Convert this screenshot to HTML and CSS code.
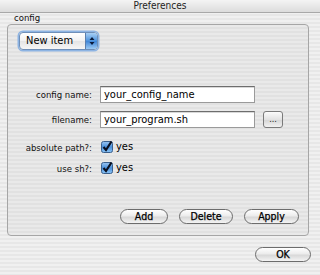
FILE: index.html
```html
<!DOCTYPE html>
<html>
<head>
<meta charset="utf-8">
<link rel="stylesheet" href="styles.css">
</head>
<body>
<div class="window">
  <div class="titlebar">Preferences</div>
  <div class="tablabel">config</div>
  <div class="group">
    <div class="popup">
      <span class="popup-text">New item</span>
      <span class="stepper">
        <svg width="10" height="12" viewBox="0 0 10 12"><path d="M5 2 L7.5 5 H2.5 Z M5 10 L7.5 7 H2.5 Z" fill="#0a1a3a"/></svg>
      </span>
    </div>
    <div class="row row-first">
      <span class="label">config name:</span>
      <div class="field">your_config_name</div>
    </div>
    <div class="row row-field">
      <span class="label">filename:</span>
      <div class="field">your_program.sh</div>
      <div class="browse">...</div>
    </div>
    <div class="row row-check row-check1">
      <span class="label">absolute path?:</span>
      <svg class="check" width="12" height="12" viewBox="0 0 12 12">
        <defs><linearGradient id="cb1" x1="0" y1="0" x2="0" y2="1"><stop offset="0" stop-color="#9cc6f2"/><stop offset="0.5" stop-color="#4a90dc"/><stop offset="1" stop-color="#8cc4f5"/></linearGradient></defs>
        <rect x="0.5" y="0.5" width="11" height="11" rx="2" fill="url(#cb1)" stroke="#3a5f8c"/>
        <path d="M2.5 6 L5 9 L10.5 0.5" fill="none" stroke="#0b1020" stroke-width="2.2"/>
      </svg>
      <span class="yes">yes</span>
    </div>
    <div class="row row-check">
      <span class="label">use sh?:</span>
      <svg class="check" width="12" height="12" viewBox="0 0 12 12">
        <defs><linearGradient id="cb2" x1="0" y1="0" x2="0" y2="1"><stop offset="0" stop-color="#9cc6f2"/><stop offset="0.5" stop-color="#4a90dc"/><stop offset="1" stop-color="#8cc4f5"/></linearGradient></defs>
        <rect x="0.5" y="0.5" width="11" height="11" rx="2" fill="url(#cb2)" stroke="#3a5f8c"/>
        <path d="M2.5 6 L5 9 L10.5 0.5" fill="none" stroke="#0b1020" stroke-width="2.2"/>
      </svg>
      <span class="yes">yes</span>
    </div>
    <div class="actions">
      <div class="btn btn-add">Add</div>
      <div class="btn btn-delete">Delete</div>
      <div class="btn btn-apply">Apply</div>
    </div>
  </div>
  <div class="footer">
    <div class="btn btn-ok">OK</div>
  </div>
</div>
</body>
</html>
```

FILE: styles.css
```css
html, body {
  margin: 0;
  padding: 0;
}
body {
  width: 320px;
  height: 275px;
  overflow: hidden;
  font-family: "DejaVu Sans Condensed", "DejaVu Sans", "Liberation Sans", sans-serif;
  font-stretch: condensed;
  color: #000;
}
.window {
  width: 320px;
  height: 275px;
  background: repeating-linear-gradient(to bottom, #f0f0f0 0, #f0f0f0 2px, #e7e7e7 2px, #e7e7e7 4px);
  box-sizing: border-box;
}
.titlebar {
  height: 12px;
  line-height: 12px;
  font-size: 10px;
  text-align: center;
  background: linear-gradient(to bottom, #f4f4f4, #dcdcdc);
  border-bottom: 1px solid #a8a8a8;
  color: #222;
}
.tablabel {
  height: 11px;
  line-height: 10px;
  font-size: 9.5px;
  padding-left: 14px;
  color: #111;
}
.group {
  margin-left: 7px;
  width: 302px;
  height: 212px;
  border: 1px solid #a6a6a6;
  border-radius: 4px;
  background: repeating-linear-gradient(to bottom, #e9e9e9 0, #e9e9e9 2px, #e1e1e1 2px, #e1e1e1 4px);
  box-sizing: border-box;
  padding-top: 7px;
}
.popup {
  margin-left: 11px;
  width: 79px;
  height: 18px;
  box-sizing: border-box;
  border-radius: 4px;
  border: 1px solid #6f8fb8;
  box-shadow: 0 0 0 1.5px #8db4e3;
  background: linear-gradient(to bottom, #ffffff, #f1f1f1 50%, #e4e4e4 51%, #f6f6f6);
  display: flex;
  align-items: center;
  overflow: hidden;
}
.popup-text {
  flex: 1;
  font-size: 11px;
  padding-left: 6px;
  line-height: 16px;
}
.stepper {
  width: 11px;
  height: 16px;
  background: linear-gradient(to bottom, #a9d0f5, #4c92dc 50%, #3f85d6 51%, #9ccaf4);
  border-left: 1px solid #5a7fae;
  display: flex;
  align-items: center;
  justify-content: center;
}
.row {
  display: flex;
  align-items: center;
  height: 17px;
}
.row-first {
  margin-top: 36px;
}
.row-field {
  margin-top: 8px;
}
.row-check {
  height: 12px;
  margin-top: 9px;
}
.row-check1 {
  margin-top: 13px;
}
.label {
  width: 84px;
  text-align: right;
  font-size: 9.5px;
  color: #111;
  margin-right: 8px;
  white-space: nowrap;
}
.field {
  width: 155px;
  height: 17px;
  box-sizing: border-box;
  background: #fff;
  border: 1px solid #9a9a9a;
  border-top-color: #6d6d6d;
  box-shadow: inset 0 1px 0 #d8d8d8;
  font-size: 11px;
  line-height: 15px;
  padding-left: 3px;
  white-space: nowrap;
  overflow: hidden;
}
.browse {
  margin-left: 8px;
  width: 20px;
  height: 17px;
  box-sizing: border-box;
  border: 1px solid #7a7a7a;
  border-radius: 3px;
  background: linear-gradient(to bottom, #fbfbfb, #e2e2e2 50%, #d4d4d4 51%, #f2f2f2);
  font-size: 9px;
  text-align: center;
  line-height: 15px;
  color: #222;
}
.check {
  display: block;
  margin-left: 1px;
}
.yes {
  font-size: 11px;
  margin-left: 3px;
  line-height: 12px;
}
.actions {
  display: flex;
  margin-top: 35px;
  margin-left: 112px;
  gap: 11px;
}
.btn {
  height: 15px;
  box-sizing: border-box;
  border: 1px solid #6c6c6c;
  border-radius: 8px;
  background: linear-gradient(to bottom, #ffffff, #ececec 45%, #d8d8d8 55%, #f4f4f4);
  font-size: 10.5px;
  line-height: 13px;
  text-align: center;
  color: #000;
  -webkit-text-stroke: 0.25px #000;
}
.btn-add { width: 48px; }
.btn-delete { width: 54px; }
.btn-apply { width: 55px; }
.footer {
  display: flex;
  justify-content: flex-end;
  padding-top: 11px;
  padding-right: 9px;
}
.btn-ok { width: 56px; }
```
